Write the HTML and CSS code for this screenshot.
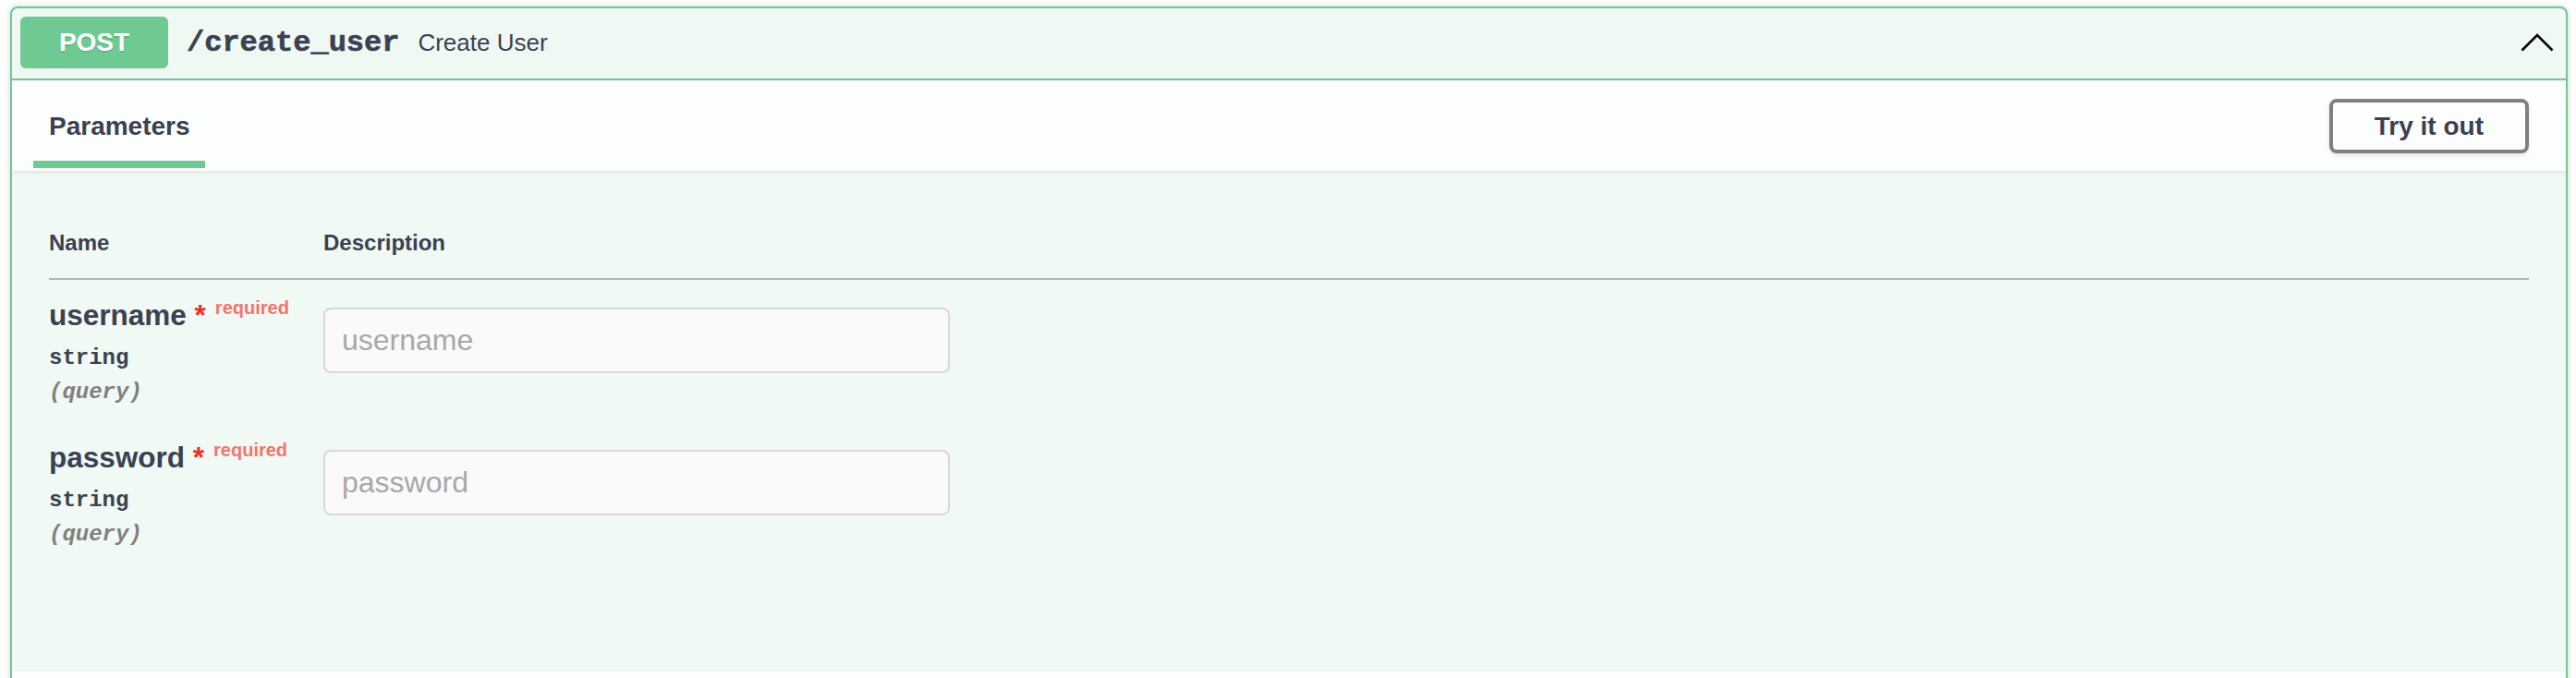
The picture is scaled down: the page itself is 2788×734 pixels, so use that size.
FILE: index.html
```html
<!DOCTYPE html>
<html lang="en">
<head>
<meta charset="utf-8">
<title>POST /create_user</title>
<link rel="stylesheet" href="styles.css">
</head>
<body>
<div class="opblock">
  <div class="summary">
    <span class="method">POST</span>
    <span class="path">/create_user</span>
    <span class="summary-desc">Create User</span>
    <svg class="arrow" width="36" height="20" viewBox="0 0 36 20" aria-hidden="true">
      <polyline points="1.5,18.5 18,2 34.5,18.5" fill="none" stroke="#000" stroke-width="2.6" stroke-linejoin="miter"/>
    </svg>
  </div>
  <div class="section-header">
    <div class="tab">
      <span class="tab-label">Parameters</span>
    </div>
    <button class="btn" type="button">Try it out</button>
  </div>
  <div class="params">
    <table class="ptable">
      <thead>
        <tr>
          <th class="col-name">Name</th>
          <th class="col-desc">Description</th>
        </tr>
      </thead>
      <tbody>
        <tr>
          <td class="col-name">
            <div class="pname">username<span class="star">&nbsp;*</span><span class="req">required</span></div>
            <div class="ptype">string</div>
            <div class="pin">(query)</div>
          </td>
          <td class="col-desc">
            <input class="pinput" type="text" placeholder="username">
          </td>
        </tr>
        <tr>
          <td class="col-name">
            <div class="pname">password<span class="star">&nbsp;*</span><span class="req">required</span></div>
            <div class="ptype">string</div>
            <div class="pin">(query)</div>
          </td>
          <td class="col-desc">
            <input class="pinput" type="text" placeholder="password">
          </td>
        </tr>
      </tbody>
    </table>
  </div>
  <div class="section-header next"></div>
</div>
</body>
</html>
```

FILE: styles.css
```css
html, body {
  margin: 0;
  padding: 0;
  background: #ffffff;
}

body {
  font-family: "Liberation Sans", Arial, sans-serif;
  color: #3b4151;
  overflow: hidden;
}

.opblock {
  margin: 7px 9px 0 11px;
  border: 2px solid #6fc993;
  border-radius: 8px;
  background: #eff8f3;
  box-shadow: 0 0 6px rgba(0, 0, 0, 0.19);
  overflow: hidden;
}

.summary {
  display: flex;
  align-items: center;
  padding: 9px 10px 11px 9px;
  border-bottom: 2px solid #6fc993;
}

.method {
  display: inline-block;
  min-width: 160px;
  padding: 12px 0;
  line-height: 32px;
  text-align: center;
  font-size: 28px;
  font-weight: 700;
  color: #ffffff;
  background: #6fc993;
  border-radius: 6px;
  text-shadow: 0 2px 0 rgba(0, 0, 0, 0.1);
}

.path {
  padding: 0 20px;
  font-family: "Liberation Mono", "Courier New", monospace;
  font-size: 32px;
  font-weight: 700;
  color: #3b4151;
  -webkit-text-stroke: 0.6px #3b4151;
}

.summary-desc {
  font-size: 26px;
  color: #3b4151;
}

.arrow {
  margin-left: auto;
  margin-right: 3px;
  display: block;
}

.section-header {
  display: flex;
  align-items: stretch;
  justify-content: space-between;
  height: 98px;
  box-sizing: border-box;
  padding: 0 40px;
  background: rgba(255, 255, 255, 0.82);
  box-shadow: 0 2px 4px rgba(0, 0, 0, 0.08);
  position: relative;
}

.tab {
  display: flex;
  flex-direction: column;
  justify-content: flex-end;
  align-items: center;
  padding-bottom: 3px;
}

.tab-label {
  font-size: 28px;
  font-weight: 700;
  line-height: 32px;
  margin-bottom: 21px;
}

.tab::after {
  content: "";
  display: block;
  width: 122%;
  height: 8px;
  background: #6fc993;
  flex-shrink: 0;
}

.btn {
  align-self: center;
  font-family: "Liberation Sans", Arial, sans-serif;
  font-size: 28px;
  font-weight: 700;
  line-height: 32px;
  color: #3b4151;
  background: transparent;
  border: 4px solid #808080;
  border-radius: 8px;
  padding: 10px 45px 9px;
  box-shadow: 0 2px 4px rgba(0, 0, 0, 0.1);
}

.params {
  min-height: 542px;
  box-sizing: border-box;
  padding: 40px;
  background: #f0f9f4;
}

.ptable {
  width: 100%;
  border-collapse: collapse;
}

.ptable th {
  text-align: left;
  font-size: 24px;
  font-weight: 700;
  line-height: 28px;
  padding: 24px 0;
  border-bottom: 2px solid #b1b9b9;
}

.ptable td {
  vertical-align: top;
  padding: 20px 0 18px;
}

.col-name {
  width: 297px;
}

.pname {
  font-size: 31.5px;
  font-weight: 700;
  line-height: 36px;
  color: #3b4151;
  white-space: nowrap;
}

.star {
  color: #ef2f26;
}

.req {
  position: relative;
  top: -12px;
  padding: 0 10px;
  font-size: 20px;
  font-weight: 700;
  color: #f2756c;
}

.ptype {
  font-family: "Liberation Mono", "Courier New", monospace;
  font-size: 24px;
  font-weight: 700;
  line-height: 28px;
  padding: 11px 0 9px;
  color: #3b4151;
}

.pin {
  font-family: "Liberation Mono", "Courier New", monospace;
  font-size: 24px;
  font-weight: 700;
  font-style: italic;
  line-height: 28px;
  color: #808080;
}

.pinput {
  display: block;
  margin: 10px 0;
  width: 678px;
  height: 71px;
  box-sizing: border-box;
  padding: 0 18px;
  font-family: "Liberation Sans", Arial, sans-serif;
  font-size: 32px;
  color: #3b4151;
  background: #fafafa;
  border: 2px solid #d9d9d9;
  border-radius: 8px;
  outline: none;
}

.pinput::placeholder {
  color: #a8a8a8;
}

.section-header.next {
  height: 100px;
}
```
